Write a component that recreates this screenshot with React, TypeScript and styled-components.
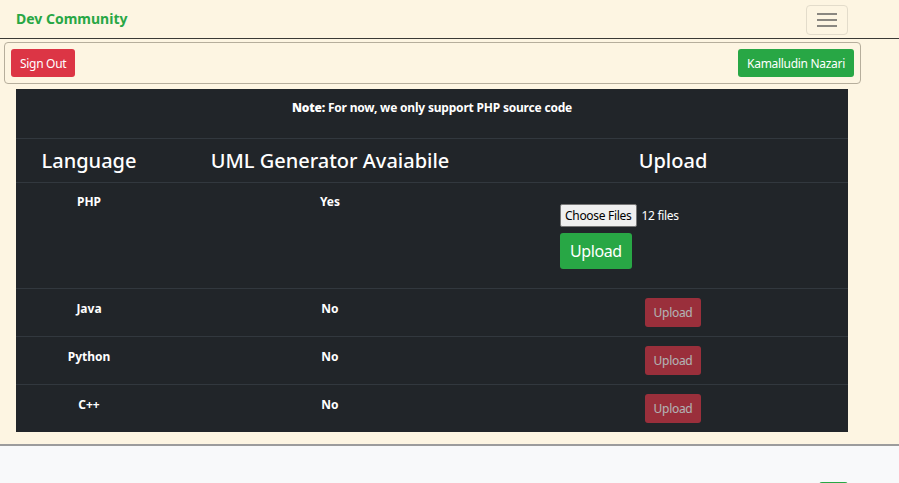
import * as React from "react";
import styled, { createGlobalStyle } from "styled-components";

// styled components
const GlobalStyle = createGlobalStyle`
body {
  margin: 0;
  background-color: #fdf5e2;
  font-family: "Noto Sans", "Liberation Sans", sans-serif;
  color: #fff;
}
`;

const Page = styled.div`
  height: 100vh;
  overflow: hidden;
  display: flex;
  flex-direction: column;
`;

const Navbar = styled.nav`
  height: 38px;
  flex-shrink: 0;
  display: flex;
  align-items: center;
  justify-content: space-between;
  padding: 0 51px 0 16px;
  border-bottom: 1px solid #3b3a36;
`;

const Brand = styled.a`
  color: #28a745;
  font-weight: 700;
  font-size: 14px;
  text-decoration: none;
  margin-top: -2px;
`;

const Toggler = styled.button`
  width: 42px;
  height: 30px;
  margin-top: 2px;
  background: transparent;
  border: 1px solid #e3dccb;
  border-radius: 4px;
  display: flex;
  flex-direction: column;
  align-items: center;
  justify-content: center;
  gap: 4px;
  padding: 0;
  span {
    display: block;
    width: 20px;
    height: 2px;
    background: #8a8780;
  }
`;

const UserBar = styled.div`
  margin: 3px 38px 0 4px;
  height: 40px;
  flex-shrink: 0;
  border: 1px solid #b6ae9c;
  border-radius: 4px;
  display: flex;
  align-items: center;
  justify-content: space-between;
  padding: 0 6px;
`;

const Button = styled.button<{ $variant: "danger" | "success"; $size?: "sm" | "lg" }>`
  border: none;
  border-radius: 3px;
  color: #fff;
  font-family: inherit;
  letter-spacing: ${(p) => (p.$size === "lg" ? "-0.4px" : "-0.3px")};
  background: ${(p) => (p.$variant === "danger" ? "#dc3545" : "#28a745")};
  font-size: ${(p) => (p.$size === "lg" ? "16px" : "12px")};
  padding: ${(p) => (p.$size === "lg" ? "0 10px" : "0 9px")};
  height: ${(p) => (p.$size === "lg" ? "36px" : "28px")};
  &:disabled {
    opacity: 0.65;
    height: 29px;
    padding: 0 9px;
  }
`;

const Main = styled.main`
  flex-shrink: 0;
  padding: 5px 51px 12px 16px;
`;

const Table = styled.table`
  width: 100%;
  background: #212529;
  border-collapse: collapse;
  td,
  th {
    border-top: 1px solid #32383e;
    text-align: center;
    vertical-align: top;
  }
  tr:first-child td {
    border-top: none;
  }
`;

const NoteCell = styled.td`
  height: 49px;
  box-sizing: border-box;
  padding: 10px 0 0;
  font-size: 12px;
  font-weight: 700;
  letter-spacing: -0.2px;
  b {
    font-weight: 900;
  }
`;

const HeadCell = styled.th<{ $width: number }>`
  width: ${(p) => p.$width}px;
  height: 43px;
  font-size: 20px;
  font-weight: 500;
  vertical-align: middle !important;
  padding: 0;
`;

const Cell = styled.td<{ $tall?: boolean }>`
  font-size: 12px;
  font-weight: 700;
  padding: ${(p) => (p.$tall ? "10px 0 19px" : "11px 0 8px")};
`;

const ButtonCell = styled.td`
  padding: 9px 0 9px;
`;

const UploadForm = styled.form`
  display: flex;
  flex-direction: column;
  align-items: flex-start;
  gap: 6px;
  padding: 11px 0 0 62px;
`;

const FileRow = styled.div`
  display: flex;
  align-items: center;
  gap: 5px;
  font-size: 12px;
  font-weight: 400;
  letter-spacing: -0.3px;
`;

const FileButton = styled.span`
  background: #efefef;
  border: 1px solid #767676;
  border-radius: 2px;
  color: #000;
  font-size: 12px;
  padding: 2px 4px;
`;

const Footer = styled.footer`
  flex: 1;
  background: #f8f9fa;
  border-top: 2px solid #9c9c9c;
  display: flex;
  justify-content: flex-end;
  padding: 36px 51px 0 0;
`;

const FooterButton = styled.div`
  width: 29px;
  height: 30px;
  flex-shrink: 0;
  background: #28a745;
  border-radius: 3px;
`;

const rows = [
  { lang: "Java", uml: "No" },
  { lang: "Python", uml: "No" },
  { lang: "C++", uml: "No" },
];

// components
const App = () => {
  return (
    <React.Fragment>
      <GlobalStyle />
      <Page>
        <Navbar>
          <Brand href="#">Dev Community</Brand>
          <Toggler aria-label="menu">
            <span />
            <span />
            <span />
          </Toggler>
        </Navbar>
        <UserBar>
          <Button $variant="danger">Sign Out</Button>
          <Button $variant="success">Kamalludin Nazari</Button>
        </UserBar>
        <Main>
          <Table>
            <tbody>
              <tr>
                <NoteCell colSpan={3}>
                  <b>Note:</b> For now, we only support PHP source code
                </NoteCell>
              </tr>
              <tr>
                <HeadCell $width={146}>Language</HeadCell>
                <HeadCell $width={336}>UML Generator Avaiabile</HeadCell>
                <HeadCell $width={350}>Upload</HeadCell>
              </tr>
              <tr>
                <Cell $tall>PHP</Cell>
                <Cell $tall>Yes</Cell>
                <Cell $tall>
                  <UploadForm>
                    <FileRow>
                      <FileButton>Choose Files</FileButton>12 files
                    </FileRow>
                    <Button $variant="success" $size="lg" type="button">
                      Upload
                    </Button>
                  </UploadForm>
                </Cell>
              </tr>
              {rows.map((r) => (
                <tr key={r.lang}>
                  <Cell>{r.lang}</Cell>
                  <Cell>{r.uml}</Cell>
                  <ButtonCell>
                    <Button $variant="danger" disabled>
                      Upload
                    </Button>
                  </ButtonCell>
                </tr>
              ))}
            </tbody>
          </Table>
        </Main>
        <Footer>
          <FooterButton />
        </Footer>
      </Page>
    </React.Fragment>
  );
};

export default App;
